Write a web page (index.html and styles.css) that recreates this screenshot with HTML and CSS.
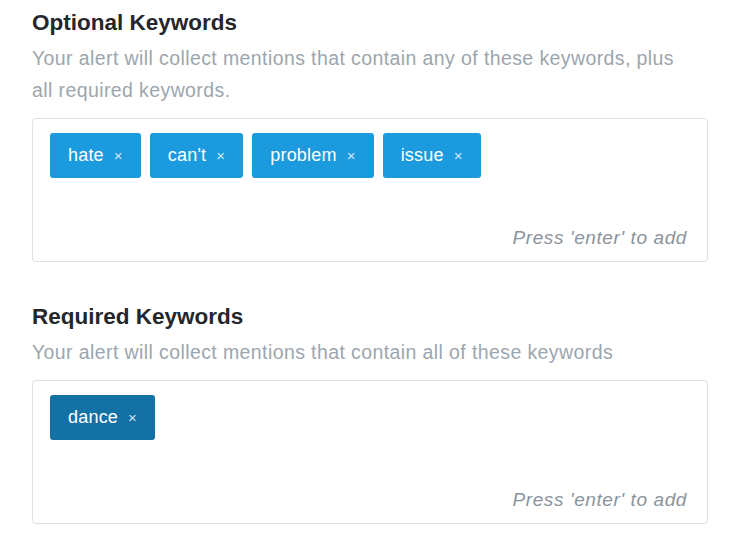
FILE: index.html
```html
<!DOCTYPE html>
<html lang="en">
<head>
	<meta charset="UTF-8">
	<meta name="viewport" content="width=device-width, initial-scale=1.0">
	<title>Alert Keywords</title>
	<link rel="stylesheet" href="styles.css">
</head>
<body>
	<div class="form">
		<section class="field">
			<h2 class="field-title">Optional Keywords</h2>
			<p class="field-desc">Your alert will collect mentions that contain any of these keywords, plus all required keywords.</p>
			<div class="tag-box">
				<div class="tags">
					<span class="tag">hate <span class="tag-x">&times;</span></span>
					<span class="tag">can't <span class="tag-x">&times;</span></span>
					<span class="tag">problem <span class="tag-x">&times;</span></span>
					<span class="tag">issue <span class="tag-x">&times;</span></span>
				</div>
				<div class="tag-hint">Press 'enter' to add</div>
			</div>
		</section>

		<section class="field">
			<h2 class="field-title">Required Keywords</h2>
			<p class="field-desc">Your alert will collect mentions that contain all of these keywords</p>
			<div class="tag-box">
				<div class="tags">
					<span class="tag tag-required">dance <span class="tag-x">&times;</span></span>
				</div>
				<div class="tag-hint">Press 'enter' to add</div>
			</div>
		</section>
	</div>
</body>
</html>
```

FILE: styles.css
```css
* {
	margin: 0;
	padding: 0;
	box-sizing: border-box;
}
body {
	background-color: white;
	font-family: "Liberation Sans", Arial, sans-serif;
	color: #1f2327;
}

/* Layout */
.form {
	padding: 7px 32px 0 32px;
	display: flex;
	flex-direction: column;
	gap: 39px;
}
.field-title {
	font-size: 22.5px;
	font-weight: bold;
	line-height: 32px;
	color: #23272b;
}
.field-desc {
	margin-top: 3px;
	max-width: 660px;
	font-size: 19.5px;
	letter-spacing: .4px;
	line-height: 32px;
	color: #9ca6ae;
}

/* Tag input */
.tag-box {
	margin-top: 12px;
	padding: 14px 20px 11px 17px;
	border: 1px solid #dde1e5;
	border-radius: 4px;
}
.tags {
	display: flex;
	flex-wrap: wrap;
	gap: 9px;
}
.tag {
	display: flex;
	align-items: center;
	gap: 10px;
	padding: 0 18px;
	height: 45px;
	font-size: 18px;
	letter-spacing: .2px;
	color: white;
	background-color: #1b9add;
	border-radius: 3px;
}
.tag-required {
	background-color: #1471a5;
}
.tag-x {
	font-size: 15px;
	color: rgba(255, 255, 255, .8);
}
.tag-hint {
	margin-top: 48px;
	text-align: right;
	font-size: 19px;
	font-style: italic;
	letter-spacing: .6px;
	line-height: 24px;
	color: #8b949c;
}
```
